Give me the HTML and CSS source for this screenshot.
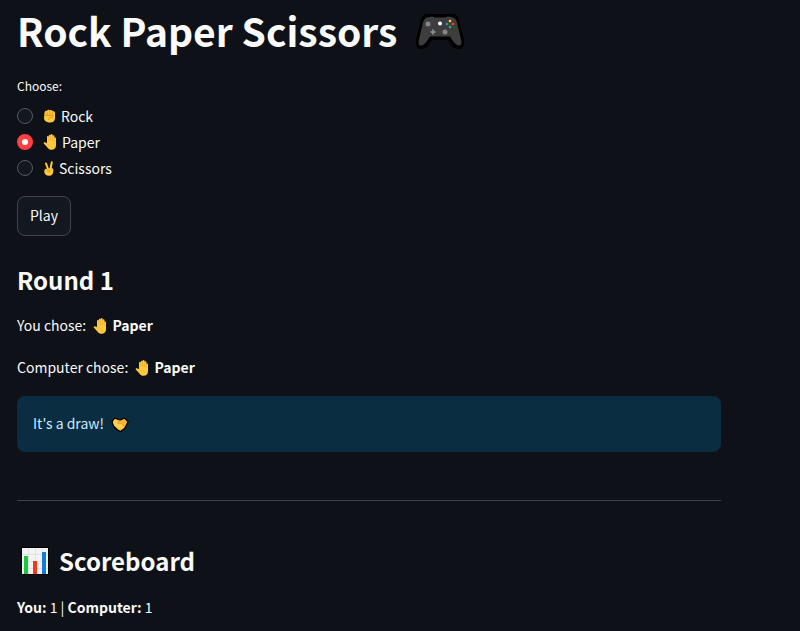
FILE: index.html
```html
<!DOCTYPE html>
<html lang="en">
<head>
<meta charset="utf-8">
<meta name="viewport" content="width=device-width, initial-scale=1">
<title>Rock Paper Scissors</title>
<link rel="stylesheet" href="styles.css">
</head>
<body>
<svg class="defs" aria-hidden="true">
  <symbol id="hand" viewBox="0 0 14 16">
    <path fill="#ffc83d" d="M4 9V2.800a.9.9 0 0 1 1.800 0V1.600a.9.9 0 0 1 1.900 0V1a.9.9 0 0 1 1.900 0v1.300a.9.9 0 0 1 1.900 0V4a.8.8 0 0 1 1.500 0v7.200c0 2.800-1.700 4.600-4.300 4.600-2 0-3.200-.8-4.300-2.400L.8 9.500C.2 8.600 1.400 7.800 2.200 8.400z"/>
    <path fill="none" stroke="#e8a01c" stroke-width=".5" d="M5.800 2v5M7.700 1.500V7M9.600 2v5M11.500 3.500v4M4 9.200c1 .5 1.700 1.300 2 2.300"/>
  </symbol>
</svg>
<main class="page">
  <h1 class="title">Rock Paper Scissors
    <svg class="pad" viewBox="0 0 50 36" role="img" aria-label="Game controller">
      <path fill="#000" d="M13 0h24c4 0 6 2 7 5l5 21c1 5-1 9-5 9-5 0-8-4-11-9H17c-3 5-6 9-11 9-4 0-6-4-5-9L6 5c1-3 3-5 7-5z"/>
      <path fill="#3d3d3d" d="M12 3.500l5-1 3 1h10l3-1 5 1c2 .7 3 2 4 5l4 17c1 4 0 6-2 6-3 0-6-4-9-9H15c-3 5-6 9-9 9-2 0-3-2-2-6l4-17c1-3 2-4.300 4-5z"/>
      <circle cx="13" cy="10" r="2.500" fill="#858585"/><circle cx="30" cy="18" r="2.500" fill="#858585"/>
      <path stroke="#858585" stroke-width="2" d="M15.500 18h5M18 15.500v5"/>
      <circle cx="25" cy="9.500" r="2" fill="#fff"/>
      <circle cx="35" cy="7" r="1.300" fill="#ffd52e"/><circle cx="32" cy="10" r="1.300" fill="#1b91e0"/>
      <circle cx="38" cy="10" r="1.300" fill="#e8432d"/><circle cx="35" cy="13" r="1.300" fill="#16c15d"/>
    </svg>
  </h1>

  <fieldset class="choices">
    <legend>Choose:</legend>
    <label class="choice"><input type="radio" name="move">
      <svg class="fist" viewBox="0 0 12 14" aria-hidden="true">
        <path fill="#ffc83d" d="M1 4c0-2 1.500-2.500 2.500-2C4 .6 5.600.5 6.300 1.400 7.300.6 8.600.9 9 2c1.300-.3 2.500.5 2.500 2v5c0 3-2 4.500-5 4.500S.5 12 .5 9z"/>
        <path fill="none" stroke="#d67d00" stroke-width=".6" d="M3.700 2.500V6M6.300 2v4M9 2.500V6M1 6.500h8c1 0 1 2-.5 2H6.500c-1 .3-1.500 1.500-1.500 2.500"/>
      </svg>
      <span>Rock</span></label>
    <label class="choice"><input type="radio" name="move" checked>
      <svg class="hand" aria-hidden="true"><use href="#hand"/></svg>
      <span>Paper</span></label>
    <label class="choice"><input type="radio" name="move">
      <svg class="victory" viewBox="0 0 11 15" aria-hidden="true">
        <path fill="none" stroke="#ffc83d" stroke-width="2" stroke-linecap="round" d="M3 2.500L5 8M8.800 1.300L7.500 8"/>
        <path fill="#ffc83d" d="M2 8l7-1c1.200.5 1.300 1.300 1.300 2.500C10.300 13 9 14.800 6 14.800S1.200 13 1.200 10z"/>
        <path fill="none" stroke="#d67d00" stroke-width=".6" d="M2.500 9.500c1-1 3.500-1 4 .2s-1 1.300-2 1.300"/>
      </svg>
      <span>Scissors</span></label>
  </fieldset>

  <button class="play" type="button">Play</button>

  <h2 class="round">Round 1</h2>
  <p class="line">You chose: <svg class="hand" aria-hidden="true"><use href="#hand"/></svg> <strong>Paper</strong></p>
  <p class="line">Computer chose: <svg class="hand" aria-hidden="true"><use href="#hand"/></svg> <strong>Paper</strong></p>

  <div class="alert" role="status">It's a draw!
    <svg class="shake" viewBox="0 0 18 15" aria-hidden="true">
      <path fill="#ffb52e" stroke="#000" stroke-width="1.200" stroke-linejoin="round" d="M4 1l3 1.500L9.500 3l4-2L17 4.500 15.500 8l-2 3.500-4 2.900-3-1.400L2.500 9 1 4.500z"/>
      <path fill="#ffcf52" d="M4 2l2.800 1.600L6 6l2 1 2-1 3.500 4-4 3L3.500 8.500 2 5z"/>
      <path fill="none" stroke="#e08c10" stroke-width=".5" d="M9.500 3.500L6.500 6l1.500 1 2.500-1 3 4"/>
    </svg>
  </div>

  <hr class="rule">

  <h2 class="board">
    <svg class="chart" viewBox="0 0 28 28" role="img" aria-label="Bar chart">
      <path fill="#000" d="M0 0h28v28H0z"/><path fill="#f3f3f3" d="M1 1h26v26H1z"/>
      <path stroke="#e2e2e2" d="M1 7.500h26M1 14.500h26M1 21.500h26M7.500 1v26M14.500 1v26M21.500 1v26"/>
      <path fill="#16c941" d="M3 9h4v18H3z"/><path fill="#f03a20" d="M12 14h4v13h-4z"/><path fill="#0f7fd7" d="M21 5h4v22h-4z"/>
    </svg>
    Scoreboard</h2>
  <p class="line"><strong>You:</strong> 1 | <strong>Computer:</strong> 1</p>
</main>
</body>
</html>
```
FILE: styles.css
```css
* { box-sizing: border-box; }

body {
  margin: 0;
  background: #0e1117;
  color: #fafafa;
  font-family: "Source Sans Pro", "Noto Sans CJK SC", sans-serif;
  font-size: 14px;
  line-height: 26px;
}

.defs { position: absolute; width: 0; height: 0; }

.page {
  max-width: 738px;
  padding: 5px 17px 10px;
}

.title {
  display: flex;
  align-items: center;
  gap: 18px;
  margin: 0;
  font-size: 39px;
  font-weight: 700;
  line-height: 50px;
}
.pad { width: 50px; height: 36px; margin-top: 4px; }

.choices {
  margin: 18px 0 0;
  padding: 0;
  border: 0;
}
.choices legend {
  padding: 0;
  margin-bottom: 4px;
  font-size: 12px;
  line-height: 26px;
}
.choice {
  display: flex;
  align-items: center;
  width: fit-content;
}
.choice input {
  appearance: none;
  width: 16px;
  height: 16px;
  margin: 0 10px 0 0;
  border: 1px solid #555961;
  border-radius: 50%;
  background: #131720;
}
.choice input:checked {
  border: 5px solid #ff4043;
  background: #fff;
}
.choice span { margin-left: 5px; }

.fist { width: 13px; height: 14px; }
.hand { width: 14px; height: 16px; vertical-align: -3px; }
.victory { width: 11px; height: 15px; }
.line .hand { margin: 0 2px 0 4px; }

.play {
  display: block;
  margin-top: 15px;
  height: 40px;
  padding: 0 12px 2px;
  border: 1px solid #41444c;
  border-radius: 8px;
  background: #131720;
  color: inherit;
  font: inherit;
}

h2 {
  margin: 0;
  font-size: 24px;
  font-weight: 700;
  line-height: 34px;
}
.round { margin-top: 27px; }

.line { margin: 16px 0 0; }
.round + .line { margin-top: 15px; }

.alert {
  margin-top: 16px;
  padding: 14px 16px 16px;
  border-radius: 8px;
  background: #0b2d42;
  color: #c7ebff;
}
.shake { width: 18px; height: 15px; margin-left: 4px; vertical-align: -3px; }

.rule {
  margin: 48px 0 0;
  border: 0;
  border-top: 1px solid #3d4047;
}

.board {
  display: flex;
  align-items: center;
  gap: 10px;
  margin-top: 43px;
  padding-left: 4px;
}
.chart { width: 28px; height: 28px; }
```
